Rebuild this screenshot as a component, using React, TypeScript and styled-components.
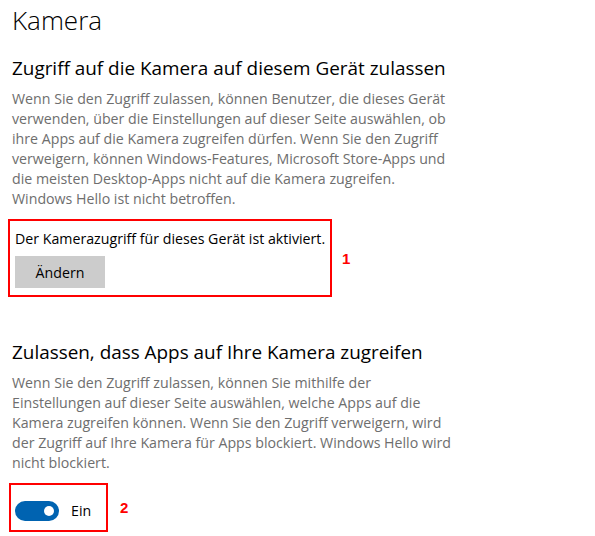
import React from "react";
import styled, { createGlobalStyle } from "styled-components";

const Global = createGlobalStyle`
  html, body { margin: 0; padding: 0; background: #ffffff; }
  body { font-family: "Open Sans", "Noto Sans", sans-serif; color: #000; }
`;

const Page = styled.div`
  padding: 0 0 0 12px;
  display: flex;
  flex-direction: column;
  align-items: flex-start;
`;

const Title = styled.h1`
  margin: 0;
  padding-top: 2px;
  font-size: 26px;
  font-weight: 300;
  line-height: 36px;
  color: #000;
`;

const Subtitle = styled.h2<{ $top: number }>`
  margin: ${(p) => p.$top}px 0 0 0;
  font-size: 18.9px;
  font-weight: 400;
  line-height: 28px;
  color: #000;
`;

const Paragraph = styled.p`
  margin: 7px 0 0 0;
  font-size: 14.2px;
  line-height: 20px;
  color: #6e6e6e;
  white-space: nowrap;
`;

const Row = styled.div<{ $top: number; $gap: number }>`
  margin-top: ${(p) => p.$top}px;
  margin-left: -4px;
  display: flex;
  align-items: center;
  gap: ${(p) => p.$gap}px;
`;

const Marker = styled.div`
  border: 2px solid #ff0000;
  box-sizing: border-box;
`;

const AccessBox = styled(Marker)`
  width: 324px;
  padding: 8px 0 7px 5px;
  display: flex;
  flex-direction: column;
  align-items: flex-start;
  gap: 7px;
`;

const AccessText = styled.div`
  font-size: 14.2px;
  line-height: 20px;
  color: #000;
`;

const Button = styled.button`
  width: 90px;
  height: 32px;
  border: none;
  background: #cccccc;
  font-family: inherit;
  font-size: 14.2px;
  color: #000;
  padding: 0;
  cursor: pointer;
`;

const ToggleBox = styled(Marker)`
  width: 99px;
  height: 49px;
  margin-left: 1px;
  padding: 16px 0 0 4px;
  display: flex;
  align-items: flex-start;
  gap: 12px;
`;

const Track = styled.div`
  width: 44px;
  height: 20px;
  border-radius: 10px;
  background: #0063b1;
  display: flex;
  align-items: center;
  justify-content: flex-end;
  padding-right: 5px;
  box-sizing: border-box;
`;

const Knob = styled.div`
  width: 10px;
  height: 10px;
  border-radius: 50%;
  background: #ffffff;
`;

const ToggleLabel = styled.span`
  font-size: 14.2px;
  line-height: 20px;
  color: #000;
`;

const Number = styled.span`
  font-family: "Liberation Sans", Arial, sans-serif;
  font-weight: 700;
  font-size: 15px;
  color: #ff0000;
`;

const p1 = [
  "Wenn Sie den Zugriff zulassen, können Benutzer, die dieses Gerät",
  "verwenden, über die Einstellungen auf dieser Seite auswählen, ob",
  "ihre Apps auf die Kamera zugreifen dürfen. Wenn Sie den Zugriff",
  "verweigern, können Windows-Features, Microsoft Store-Apps und",
  "die meisten Desktop-Apps nicht auf die Kamera zugreifen.",
  "Windows Hello ist nicht betroffen.",
];

const p2 = [
  "Wenn Sie den Zugriff zulassen, können Sie mithilfe der",
  "Einstellungen auf dieser Seite auswählen, welche Apps auf die",
  "Kamera zugreifen können. Wenn Sie den Zugriff verweigern, wird",
  "der Zugriff auf Ihre Kamera für Apps blockiert. Windows Hello wird",
  "nicht blockiert.",
];

const Lines = ({ lines }: { lines: string[] }) => (
  <Paragraph>
    {lines.map((l, i) => (
      <React.Fragment key={i}>
        {l}
        {i < lines.length - 1 && <br />}
      </React.Fragment>
    ))}
  </Paragraph>
);

export default function App() {
  return (
    <>
      <Global />
      <Page>
        <Title>Kamera</Title>
        <Subtitle $top={16}>Zugriff auf die Kamera auf diesem Gerät zulassen</Subtitle>
        <Lines lines={p1} />
        <Row $top={10} $gap={10}>
          <AccessBox>
            <AccessText>Der Kamerazugriff für dieses Gerät ist aktiviert.</AccessText>
            <Button>Ändern</Button>
          </AccessBox>
          <Number>1</Number>
        </Row>
        <Subtitle $top={41}>Zulassen, dass Apps auf Ihre Kamera zugreifen</Subtitle>
        <Lines lines={p2} />
        <Row $top={10} $gap={12}>
          <ToggleBox>
            <Track>
              <Knob />
            </Track>
            <ToggleLabel>Ein</ToggleLabel>
          </ToggleBox>
          <Number>2</Number>
        </Row>
      </Page>
    </>
  );
}
